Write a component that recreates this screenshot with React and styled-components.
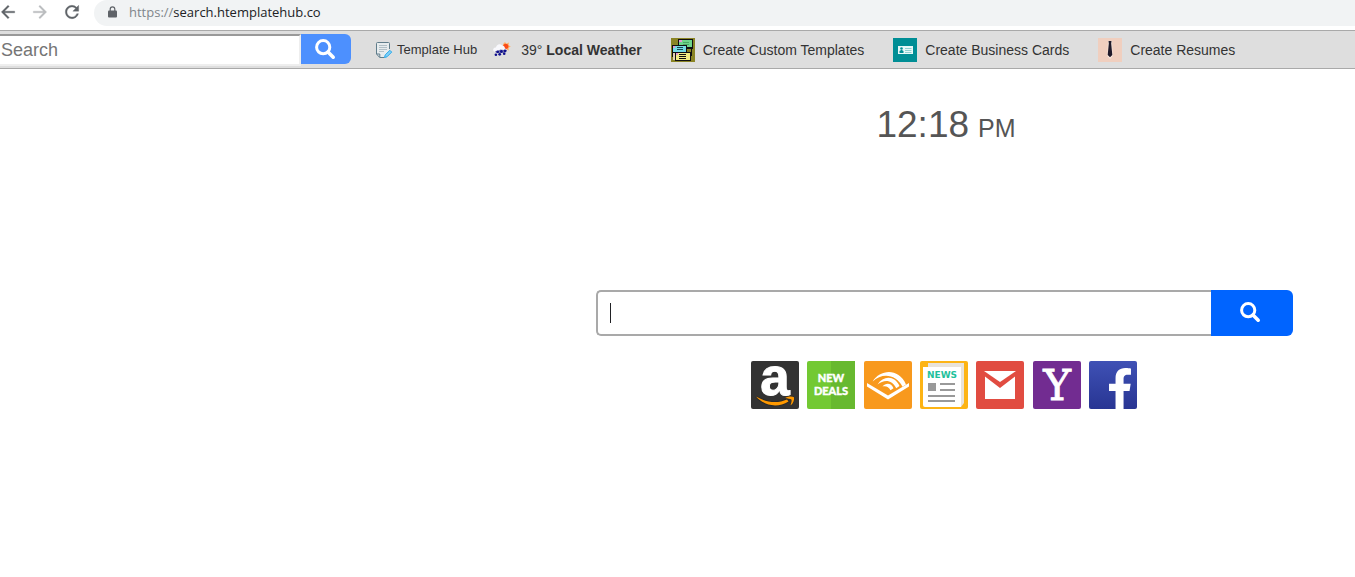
import React, { Component } from 'react';
import styled, { createGlobalStyle, ThemeProvider } from 'styled-components';
import { FaFacebookF } from 'react-icons/fa';
import { MdArrowBack, MdArrowForward, MdRefresh } from 'react-icons/md';

const theme = {
  font: '"Liberation Sans", Arial, sans-serif',
  urlFont: '"Open Sans", "Noto Sans", sans-serif',
  fontColour: '#333333',
  clockColour: '#555555',
  toolbar: '#dedede',
  line: '#a9a9a9',
};

const GlobalStyle = createGlobalStyle`
  * {
    box-sizing: border-box;
  }

  body {
    margin: 0;
    background: #ffffff;
    overflow-x: hidden;
  }

  svg {
    display: block;
    flex: none;
    overflow: visible;
  }
`;

const AppContainer = styled.div`
  font-family: ${props => props.theme.font};
  color: ${props => props.theme.fontColour};
`;

const BrowserBar = styled.header`
  display: flex;
  height: 30px;
  padding-bottom: 4px;
`;

const NavButtons = styled.nav`
  display: flex;
  align-items: center;
  width: 94px;
  gap: 12px;
  padding-bottom: 2px;
  margin-left: -2px;
  margin-right: 2px;
`;

const NavButton = styled.button`
  padding: 0;
  border: 0;
  background: none;
  color: ${props => (props.disabled ? '#babcbe' : '#5f6368')};

  path:last-child {
    stroke: currentColor;
    stroke-width: 0.4px;
  }
`;

const AddressBar = styled.div`
  display: flex;
  flex: 1;
  align-items: center;
  gap: 12px;
  padding: 0 14px 2px;
  border-radius: 14px 0 0 14px;
  background: #f1f3f4;
  color: #5f6368;
`;

const Address = styled.span`
  font-family: ${props => props.theme.urlFont};
  font-size: 13px;
  line-height: 18px;
  color: #80868b;

  strong {
    font-weight: 400;
    color: #202124;
  }
`;

const Toolbar = styled.div`
  display: flex;
  align-items: center;
  height: 39px;
  border-top: 1px solid ${props => props.theme.line};
  border-bottom: 1px solid ${props => props.theme.line};
  background: ${props => props.theme.toolbar};
`;

const ToolbarSearch = styled.form`
  display: flex;
  align-items: flex-start;
  margin-right: 25px;
`;

const ToolbarInput = styled.input`
  width: 301px;
  height: 32px;
  padding: 2px 1px 0;
  border: solid;
  border-width: 2px 2px 2px 0;
  border-color: #999999 #eeeeee #eeeeee;
  border-radius: 0;
  background: #ffffff;
  font-family: inherit;
  font-size: 18px;
  outline: none;

  &::placeholder {
    color: #757575;
    opacity: 1;
  }
`;

const SearchButton = styled.button`
  display: flex;
  align-items: center;
  justify-content: center;
  width: ${props => (props.$large ? '82px' : '50px')};
  height: ${props => (props.$large ? '46px' : '30px')};
  padding: ${props => (props.$large ? '0 4px 2px 0' : '0 2px 0 0')};
  border: 0;
  border-radius: 0 6px 6px 0;
  background: ${props => (props.$large ? '#0064ff' : '#4d90fe')};
  color: #ffffff;
`;

const ToolbarLink = styled.a`
  display: flex;
  align-items: center;
  gap: ${props => props.$gap || '8px'};
  margin-right: ${props => props.$after || '29px'};
  font-size: ${props => (props.$small ? '13px' : '14px')};
  line-height: 24px;
  color: inherit;
  text-decoration: none;
  white-space: nowrap;
`;

const Main = styled.main`
  display: flex;
  flex-direction: column;
  align-items: center;
  padding: 34px 62px 40px 596px;
`;

const Clock = styled.time`
  display: flex;
  align-items: baseline;
  gap: 9px;
  padding-left: 3px;
  margin-bottom: 143px;
  font-size: 37px;
  line-height: 44px;
  color: ${props => props.theme.clockColour};

  small {
    font-size: 25px;
    line-height: 1;
  }
`;

const SearchForm = styled.form`
  display: flex;
  width: 100%;
  margin-bottom: 25px;
`;

const SearchField = styled.label`
  display: flex;
  flex: 1;
  align-items: center;
  height: 46px;
  padding-left: 12px;
  border: 2px solid ${props => props.theme.line};
  border-right: 0;
  border-radius: 5px 0 0 5px;
`;

const Caret = styled.span`
  width: 1px;
  height: 20px;
  background: #202124;
`;

const SearchInput = styled.input`
  flex: 1;
  min-width: 0;
  height: 40px;
  padding: 0;
  border: 0;
  background: none;
  font-family: inherit;
  font-size: 18px;
  outline: none;
`;

const Shortcuts = styled.nav`
  display: flex;
  justify-content: space-between;
  width: 386px;
  margin-right: 1px;
`;

const Shortcut = styled.a`
  width: 48px;
  height: 48px;
  border-radius: 2px;
  background: ${props => props.$background};
  color: #ffffff;
`;

const FacebookMark = styled(FaFacebookF)`
  width: 26px;
  height: 41px;
  margin-left: 18px;
  transform: translateY(7px);
`;

const SearchIcon = () => (
  <svg width="20" height="20" viewBox="0 0 20 20" fill="none" stroke="currentColor">
    <circle cx="8.2" cy="8.2" r="6.6" strokeWidth="3" />
    <path d="M13 13l5.2 5.2" strokeWidth="3.6" strokeLinecap="round" />
  </svg>
);

const LockIcon = () => (
  <svg width="9" height="12" viewBox="0 0 9 12">
    <path d="M2.2 5V3.2a2.3 2.3 0 0 1 4.6 0V5" fill="none" stroke="currentColor" strokeWidth="1.2" />
    <rect y="4.5" width="9" height="7" rx="1" fill="currentColor" />
  </svg>
);

const NoteIcon = () => (
  <svg width="16" height="16" viewBox="0 0 16 16" fill="none">
    <path
      d="M13.5 7V1.5q0-1-1-1h-11q-1 0-1 1v10.5l3.2 3.5h4.8"
      fill="#e7ecee"
      stroke="#607d8b"
    />
    <path d="M.8 12h3v3.2" stroke="#607d8b" />
    <path d="M3 3.5h8M3 5.5h8M3 7.5h8M3 9.5h5" stroke="#a5b5bc" strokeWidth="0.8" />
    <path d="M8.5 15.5l.7-2.6 4.7-4.6 1.8 1.8-4.7 4.7z" fill="#7fd0f8" stroke="#29a9ea" />
  </svg>
);

const WeatherIcon = () => (
  <svg width="19" height="18" viewBox="0 0 19 18">
    <path
      d="M13 1l1.3 1.7L17 1.5l-.5 2.7 2.3 1.3-2.3 1.3.5 2.7-3-.9-3-3.3.3-2.6z"
      fill="#ffb066"
    />
    <circle cx="13.8" cy="5.3" r="2.6" fill="#fa4b18" />
    <path
      d="M2 10.5C.2 9 1.5 6.4 4 6.6 4.3 3.2 8.4 2 10.3 4.8c2.2.1 2.8 1.6 2.5 2.8 2.8.2 3.2 3.2 1 4.1-3 .8-8 .5-11.8-1.2z"
      fill="#f8f8fc"
    />
    <path d="M3 10.3q3-.2 5.5-1.8 2.5.8 6.500.2-.2 3.2-3 3.2H5q-1.7 0-2-1.6z" fill="#7b7cae" />
    <g fill="#10108e">
      <circle cx="5.7" cy="10.8" r="1.4" />
      <circle cx="9.4" cy="10.5" r="1.4" />
      <circle cx="13" cy="9.8" r="1.4" />
      <circle cx="3.9" cy="13.8" r="1.3" />
      <circle cx="7.7" cy="13.3" r="1.4" />
      <circle cx="12.2" cy="12.8" r="1.3" />
    </g>
  </svg>
);

const TemplatesIcon = () => (
  <svg width="24" height="24" viewBox="0 0 24 24" shapeRendering="crispEdges">
    <path d="M0 0h24v24H0z" fill="#8a8425" />
    <path d="M7 1h15v10H7z" fill="#111111" />
    <path d="M8 2h13v7H8z" fill="#6fd58b" />
    <path d="M8 2h3v2H8z" fill="#e59bd0" />
    <path d="M12 4h6v1h-6zM12 6h6v1h-6z" fill="#4aa765" />
    <path d="M1 7h15v8H1z" fill="#111111" />
    <path d="M2 8h13v6H2z" fill="#76dce4" />
    <path d="M2 8h2v2H2z" fill="#e59bd0" />
    <path d="M6 9h6v1H6zM6 11h6v1H6z" fill="#174d55" />
    <path d="M1 15h4v4H1z" fill="#111111" />
    <path d="M2 15h2v7H2z" fill="#e6d5b3" />
    <path d="M4 14h16v9H4z" fill="#111111" />
    <path d="M5 15h14v7H5z" fill="#f3ef83" />
    <path d="M5 15h2v2H5z" fill="#e59bd0" />
    <path d="M8 16h7v1H8zM8 18h7v1H8zM8 20h7v1H8z" fill="#111111" />
    <path d="M20 11h1v7h-1z" fill="#111111" />
  </svg>
);

const CardsIcon = () => (
  <svg width="24" height="24" viewBox="0 0 24 24">
    <path d="M0 0h24v24H0z" fill="#008e95" />
    <path d="M5 8h15v8H5z" fill="#e7f8f8" />
    <circle cx="8.5" cy="10.5" r="1.3" fill="#008e95" />
    <path d="M6.5 15v-2l2-1.2 2 1.2v2z" fill="#008e95" />
    <path d="M12 10.5h6.5M12 12.5h6.5M12 14.5h6.5" stroke="#8fd0d2" />
  </svg>
);

const TieIcon = () => (
  <svg width="24" height="24" viewBox="0 0 24 24">
    <path d="M0 0h24v24H0z" fill="#f0cfbf" />
    <path d="M10 3h4l.6 15-2.6 3-2.6-3z" fill="#fae9df" />
    <path d="M10.5 3h3l-.3 2.600 1.100 11.400L12 19.200 9.700 17l1.100-11.400z" fill="#201a2a" />
  </svg>
);

const AmazonIcon = () => (
  <svg width="48" height="48" viewBox="0 0 48 48">
    <text
      x="24"
      y="34"
      textAnchor="middle"
      fontFamily="Liberation Sans, Arial, sans-serif"
      fontSize="53"
      fontWeight="700"
      fill="#ffffff"
      stroke="#ffffff"
    >
      a
    </text>
    <path
      d="M5 35.5c11 6.5 22 7 31 3l1.5 2C27 47 14 45.5 5 35.5z"
      fill="#ff9900"
      stroke="#2a2a2a"
      strokeWidth="2"
      paintOrder="stroke"
    />
    <path
      d="M34 37c3.500-1.800 7.200-1.800 9-.8.5 2.800-.8 6.500-3.600 8.300 1-2.700 1.500-4.800 1-6-1.500-.9-3.800-.9-6.400-1.500z"
      fill="#ff9900"
      stroke="#2a2a2a"
      strokeWidth="1"
      paintOrder="stroke"
    />
  </svg>
);

const DealsIcon = () => (
  <svg width="48" height="48" viewBox="0 0 48 48">
    <path d="M24 0h24v48H24z" fill="#67b92f" />
    <g
      fill="#ffffff"
      stroke="#ffffff"
      strokeWidth="0.4"
      fontFamily="Lato, sans-serif"
      fontSize="11"
      fontWeight="900"
      textAnchor="middle"
    >
      <text x="24" y="21">NEW</text>
      <text x="24" y="34">DEALS</text>
    </g>
  </svg>
);

const AudibleIcon = () => (
  <svg width="48" height="48" viewBox="0 0 48 48" fill="#ffffff">
    <path d="M3 22v3.5L24 38.5 45 25.5V22L24 34.5z" />
    <path d="M8.7 20.5C16 8.500 34.500 6.500 42 23.500l-3.500 2.200C32 13 18 11.500 8.700 20.500z" />
    <path d="M13.5 23.5C19.5 14 31 14.5 35.5 25l-3.300 2.200C28 18.800 20.500 18 13.500 23.500z" />
    <path d="M18.5 25.5c3.5-4 8.800-3.500 11 1.800l-3 2c-1.800-3.500-4.500-4.600-8-3.800z" />
  </svg>
);

const NewsIcon = () => (
  <svg width="48" height="48" viewBox="0 0 48 48">
    <path d="M8 2h36v40l-3 4H8z" fill="#e9e3da" />
    <path d="M3 6h38v40H5q-2 0-2-2z" fill="#ffffff" />
    <text
      x="7"
      y="17"
      fontFamily="DejaVu Sans, sans-serif"
      fontSize="9"
      fontWeight="700"
      fill="#1fc19b"
    >
      NEWS
    </text>
    <path d="M8 22h8v8H8z" fill="#999999" />
    <path d="M20 23h15M20 29h15M8 35h27M8 40h27" stroke="#999999" strokeWidth="2" />
  </svg>
);

const GmailIcon = () => (
  <svg width="48" height="48" viewBox="0 0 48 48">
    <path d="M8 10h32L24 21z" fill="#ffffff" />
    <path d="M9 15.5l15 11.5 15-11.5V38H9z" fill="#ffffff" />
  </svg>
);

const YahooIcon = () => (
  <svg width="48" height="48" viewBox="0 0 48 48">
    <text
      x="24"
      y="39"
      textAnchor="middle"
      fontFamily="DejaVu Serif, serif"
      fontSize="42"
      fill="#ffffff"
      stroke="#ffffff"
      strokeWidth="0.8"
    >
      Y
    </text>
  </svg>
);

const links = [
  { label: 'Create Custom Templates', icon: <TemplatesIcon /> },
  { label: 'Create Business Cards', icon: <CardsIcon /> },
  { label: 'Create Resumes', icon: <TieIcon /> },
];

const shortcuts = [
  { label: 'Amazon', background: '#333333', icon: <AmazonIcon /> },
  { label: 'New Deals', background: '#73c933', icon: <DealsIcon /> },
  { label: 'Audible', background: '#f8991d', icon: <AudibleIcon /> },
  { label: 'News', background: '#fdb415', icon: <NewsIcon /> },
  { label: 'Gmail', background: '#e14c41', icon: <GmailIcon /> },
  { label: 'Yahoo', background: '#722c91', icon: <YahooIcon /> },
  {
    label: 'Facebook',
    background: 'linear-gradient(#3f51b5, #283593)',
    icon: <FacebookMark />,
  },
];

class App extends Component {
  state = { query: '' };

  handleChange = event => {
    this.setState({ query: event.target.value });
  };

  handleSubmit = event => {
    event.preventDefault();
  };

  render() {
    const { query } = this.state;
    return (
      <ThemeProvider theme={theme}>
        <GlobalStyle />
        <AppContainer>
          <BrowserBar>
            <NavButtons>
              <NavButton aria-label="Back">
                <MdArrowBack size={20} strokeWidth={0} />
              </NavButton>
              <NavButton aria-label="Forward" disabled>
                <MdArrowForward size={20} />
              </NavButton>
              <NavButton aria-label="Reload">
                <MdRefresh size={20} />
              </NavButton>
            </NavButtons>
            <AddressBar>
              <LockIcon />
              <Address>
                https://<strong>search.htemplatehub.co</strong>
              </Address>
            </AddressBar>
          </BrowserBar>

          <Toolbar>
            <ToolbarSearch onSubmit={this.handleSubmit}>
              <ToolbarInput type="text" placeholder="Search" aria-label="Toolbar search" />
              <SearchButton aria-label="Search from toolbar">
                <SearchIcon />
              </SearchButton>
            </ToolbarSearch>
            <ToolbarLink href="#hub" $small $gap="5px" $after="15px">
              <NoteIcon />
              Template Hub
            </ToolbarLink>
            <ToolbarLink href="#weather" $gap="10px">
              <WeatherIcon />
              <span>
                39° <b>Local Weather</b>
              </span>
            </ToolbarLink>
            {links.map(({ label, icon }) => (
              <ToolbarLink key={label} href="#create">
                {icon}
                {label}
              </ToolbarLink>
            ))}
          </Toolbar>

          <Main>
            <Clock>
              12:18 <small>PM</small>
            </Clock>
            <SearchForm onSubmit={this.handleSubmit}>
              <SearchField>
                {query ? null : <Caret />}
                <SearchInput
                  type="text"
                  aria-label="Search the web"
                  value={query}
                  onChange={this.handleChange}
                />
              </SearchField>
              <SearchButton $large aria-label="Search">
                <SearchIcon />
              </SearchButton>
            </SearchForm>
            <Shortcuts>
              {shortcuts.map(({ label, background, icon }) => (
                <Shortcut key={label} href="#open" aria-label={label} $background={background}>
                  {icon}
                </Shortcut>
              ))}
            </Shortcuts>
          </Main>
        </AppContainer>
      </ThemeProvider>
    );
  }
}

export default App;
